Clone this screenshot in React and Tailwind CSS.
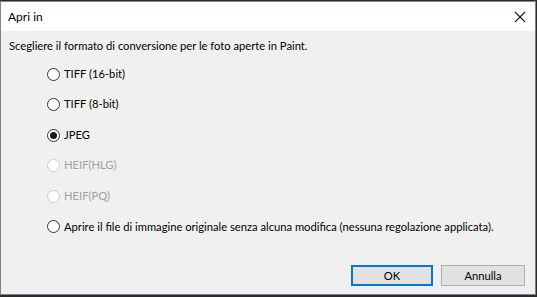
import React from "react";

const options = [
  { label: "TIFF (16-bit)", checked: false, disabled: false },
  { label: "TIFF (8-bit)", checked: false, disabled: false },
  { label: "JPEG", checked: true, disabled: false },
  { label: "HEIF(HLG)", checked: false, disabled: true },
  { label: "HEIF(PQ)", checked: false, disabled: true },
  {
    label:
      "Aprire il file di immagine originale senza alcuna modifica (nessuna regolazione applicata).",
    checked: false,
    disabled: false,
  },
];

const Radio = ({ checked, disabled }) => (
  <span
    className={`flex items-center justify-center w-[13px] h-[13px] rounded-full border bg-white shrink-0 ${
      disabled ? "border-[#cccccc]" : "border-[#333333]"
    }`}
  >
    {checked && <span className="w-[7px] h-[7px] rounded-full bg-[#1a1a1a]" />}
  </span>
);

export default function App() {
  return (
    <div
      className="w-[537px] h-[297px] bg-[#2b2b2b] pt-px"
      style={{ fontFamily: 'Lato, "Segoe UI", sans-serif' }}
    >
      <div className="w-[536px] h-[294px] border border-[#7d8590] bg-[#f0f0f0] flex flex-col text-[11.2px] text-black">
        <div className="h-[29px] bg-white flex items-center justify-between pl-[7px] pr-[9px]">
          <span className="text-[12px]">Apri in</span>
          <svg width="12" height="12" viewBox="0 0 12 12">
            <path d="M1 1 L11 11 M11 1 L1 11" stroke="#1a1a1a" strokeWidth="1.1" fill="none" />
          </svg>
        </div>
        <div className="pl-[8px] pt-[7px] leading-[16px] whitespace-nowrap">
          Scegliere il formato di conversione per le foto aperte in Paint.
        </div>
        <div className="flex flex-col gap-[14.6px] pl-[46px] pt-[12px]">
          {options.map((o) => (
            <div key={o.label} className="flex items-center gap-[4px] h-[16px] whitespace-nowrap">
              <Radio checked={o.checked} disabled={o.disabled} />
              <span className={o.disabled ? "text-[#a0a0a0]" : ""}>{o.label}</span>
            </div>
          ))}
        </div>
        <div className="mt-auto flex justify-end gap-[8px] pr-[10px] pb-[8px]">
          <button className="w-[82px] h-[21px] border-2 border-[#0078d7] bg-[#e1e1e1] text-[11.2px] leading-none">
            OK
          </button>
          <button className="w-[84px] h-[21px] border border-[#adadad] bg-[#e1e1e1] text-[11.2px] leading-none">
            Annulla
          </button>
        </div>
      </div>
    </div>
  );
}
